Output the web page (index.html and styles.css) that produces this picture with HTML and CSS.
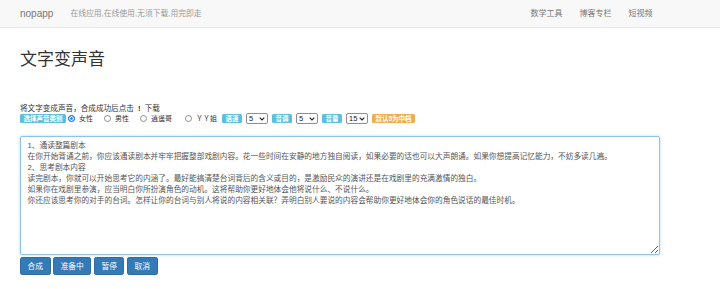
FILE: index.html
```html
<!DOCTYPE html>
<html lang="zh-CN">
<head>
    <meta charset="UTF-8">
    <meta name="viewport" content="width=device-width, initial-scale=1.0">
    <title>文字变声音 - nopapp</title>
    <link rel="stylesheet" href="styles.css">
</head>
<body>
    <nav class="navbar">
        <div class="navbar-inner">
            <a class="brand" href="#">nopapp</a>
            <span class="slogan">在线应用,在线使用,无须下载,用完即走</span>
            <ul class="nav">
                <li><a href="#">数学工具</a></li>
                <li><a href="#">博客专栏</a></li>
                <li><a href="#">短视频</a></li>
            </ul>
        </div>
    </nav>

    <div class="container">
        <h1>文字变声音</h1>

        <p class="tip">将文字变成声音，合成成功后点击 <span class="icon-excl">!</span> 下载</p>

        <div class="controls">
            <span class="label label-info">选择声音类别</span>
            <label class="opt"><input type="radio" name="per" checked>女性</label>
            <label class="opt"><input type="radio" name="per">男性</label>
            <label class="opt"><input type="radio" name="per">逍遥哥</label>
            <label class="opt"><input type="radio" name="per">ＹＹ姐</label>
            <span class="label label-info">语速</span>
            <select class="sel"><option>5</option></select>
            <span class="label label-info">音调</span>
            <select class="sel"><option>5</option></select>
            <span class="label label-info">音量</span>
            <select class="sel"><option>15</option></select>
            <span class="label label-warning">默认5为中档</span>
        </div>

        <textarea class="form-control" rows="10">1、通读整篇剧本
在你开始背诵之前，你应该通读剧本并牢牢把握整部戏剧内容。花一些时间在安静的地方独自阅读，如果必要的话也可以大声朗诵。如果你想提高记忆能力，不妨多读几遍。
2、思考剧本内容
读完剧本，你就可以开始思考它的内涵了。最好能搞清楚台词背后的含义或目的，是激励民众的演讲还是在戏剧里的充满激情的独白。
如果你在戏剧里参演，应当明白你所扮演角色的动机。这将帮助你更好地体会他将说什么、不说什么。
你还应该思考你的对手的台词。怎样让你的台词与别人将说的内容相关联？弄明白别人要说的内容会帮助你更好地体会你的角色说话的最佳时机。</textarea>

        <div class="actions">
            <button class="btn">合成</button>
            <button class="btn">准备中</button>
            <button class="btn">暂停</button>
            <button class="btn">取消</button>
        </div>
    </div>
</body>
</html>
```

FILE: styles.css
```css
body {
    margin: 0;
    font-family: "Liberation Sans", "Noto Sans CJK SC", sans-serif;
    font-size: 7.7px;
    line-height: 11px;
    color: #333;
    background-color: #fff;
}

a {
    text-decoration: none;
}

/* top bar */
.navbar {
    height: 27px;
    background-color: #f8f8f8;
    border-bottom: 1px solid #e7e7e7;
}

.navbar-inner {
    display: flex;
    align-items: center;
    height: 100%;
    padding: 0 59px 0 12px;
}

.brand {
    padding: 0 8px;
    font-size: 10px;
    color: #777;
}

.slogan {
    margin-left: 9px;
    font-size: 7.8px;
    color: #999;
}

.nav {
    display: flex;
    list-style: none;
    margin: 0 0 0 auto;
    padding: 0;
}

.nav a {
    display: block;
    padding: 0 8.5px;
    font-size: 8px;
    color: #777;
}

/* page */
.container {
    width: 640px;
    padding: 0 20px;
}

h1 {
    margin: 22px 0 0;
    font-size: 17px;
    line-height: 20px;
    font-weight: normal;
    color: #333;
}

.tip {
    margin: 33px 0 0;
    font-size: 7.6px;
}

.icon-excl {
    font-weight: bold;
    margin: 0 2px;
}

.controls {
    display: flex;
    align-items: center;
    height: 11px;
    margin-top: -1px;
    font-size: 7px;
}

.label {
    display: inline-block;
    padding: 1px 3.5px;
    font-size: 6.5px;
    line-height: 7.5px;
    font-weight: bold;
    color: #fff;
    border-radius: 1.5px;
    margin-right: 4px;
}

.label-info {
    background-color: #5bc0de;
}

.label-warning {
    background-color: #f0ad4e;
}

.controls .label:first-child {
    margin-right: 2px;
}

.opt {
    display: flex;
    align-items: center;
    margin-right: 11px;
    color: #333;
}

.opt:nth-of-type(3) {
    margin-right: 13px;
}

.opt:nth-of-type(4) {
    margin-right: 5px;
}

.opt input {
    -webkit-appearance: none;
    appearance: none;
    width: 7px;
    height: 7px;
    margin: 0 4px 0 0;
    border: 1px solid #8f8f8f;
    border-radius: 50%;
    box-sizing: border-box;
}

.opt input:checked {
    border-color: #0075ff;
    box-shadow: inset 0 0 0 1.2px #fff;
    background-color: #0075ff;
}

.sel {
    -webkit-appearance: none;
    appearance: none;
    box-sizing: border-box;
    width: 22px;
    height: 11px;
    margin-right: 4px;
    padding: 0 0 0 2px;
    font-family: "Liberation Sans", sans-serif;
    font-size: 7.5px;
    line-height: 9px;
    border: 1px solid #8f8f8f;
    border-radius: 2px;
    color: #222;
    background: #fff url("data:image/svg+xml,%3Csvg xmlns='http://www.w3.org/2000/svg' width='6' height='4' viewBox='0 0 6 4'%3E%3Cpath d='M0.7 0.7 3 3 5.3 0.7' fill='none' stroke='%23222' stroke-width='1.1'/%3E%3C/svg%3E") no-repeat right 2px center;
}

.form-control {
    display: block;
    box-sizing: border-box;
    width: 640px;
    height: 119px;
    margin-top: 12px;
    padding: 3.3px 6.6px;
    font-family: "Liberation Sans", "Noto Sans CJK SC", sans-serif;
    font-size: 7.7px;
    line-height: 11px;
    color: #555;
    border: 1px solid #8fc3ec;
    border-radius: 2px;
    box-shadow: 0 0 3px rgba(102, 175, 233, 0.5);
    outline: none;
}

.actions {
    display: flex;
    gap: 2.5px;
    margin-top: 1.5px;
}

.btn {
    height: 18px;
    padding: 0 6.6px;
    font-family: "Liberation Sans", "Noto Sans CJK SC", sans-serif;
    font-size: 7.7px;
    color: #fff;
    background-color: #337ab7;
    border: 1px solid #2e6da4;
    border-radius: 2.2px;
}
```
